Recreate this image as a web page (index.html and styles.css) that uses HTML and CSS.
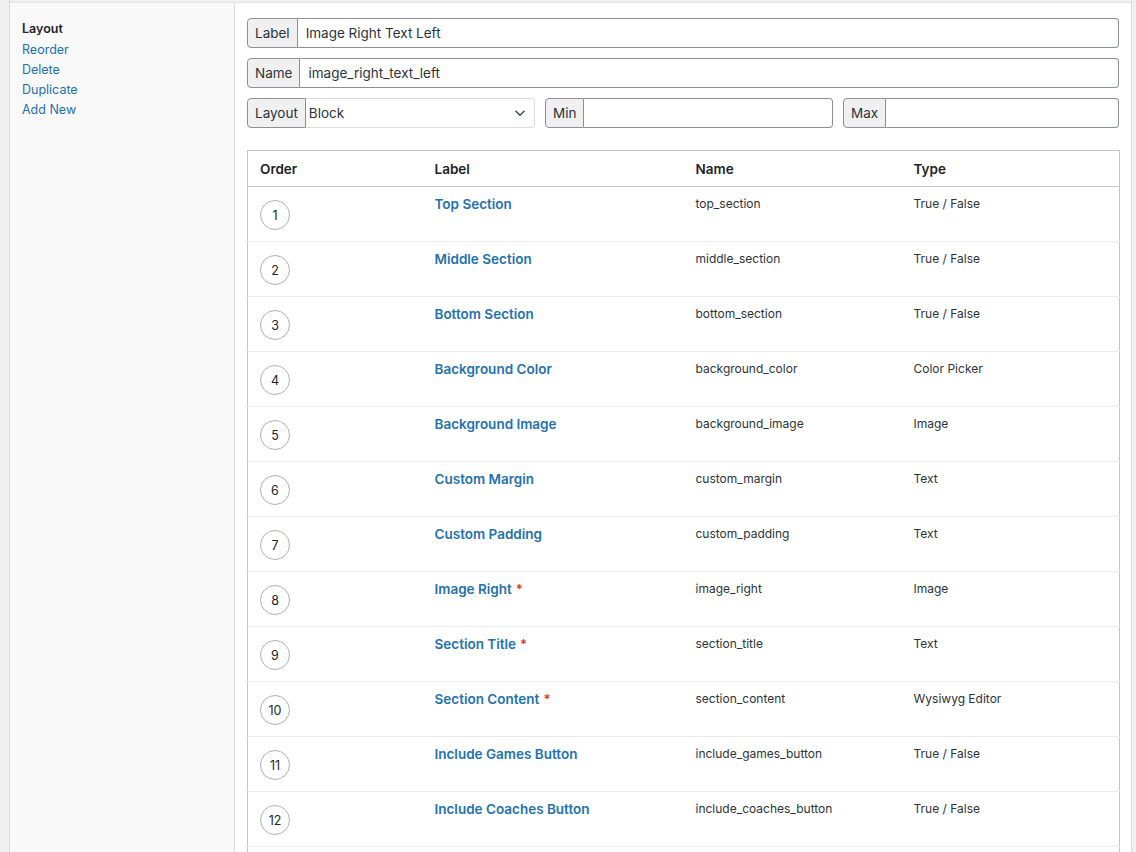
FILE: index.html
```html
<!DOCTYPE html>
<html>
<head>
<meta charset="utf-8">
<link rel="stylesheet" href="styles.css">
</head>
<body>
<div class="wrap">
  <aside class="side">
    <div class="side-title">Layout</div>
    <a class="side-link">Reorder</a>
    <a class="side-link">Delete</a>
    <a class="side-link">Duplicate</a>
    <a class="side-link">Add New</a>
  </aside>
  <main class="main">
    <div class="field"><span class="addon">Label</span><span class="input">Image Right Text Left</span></div>
    <div class="field"><span class="addon">Name</span><span class="input">image_right_text_left</span></div>
    <div class="row3">
      <div class="field"><span class="addon">Layout</span><span class="select">Block<svg class="chev" width="12" height="8" viewBox="0 0 12 8"><path d="M1.5 1.8 6 6.2 10.5 1.8" fill="none" stroke="#3c434a" stroke-width="1.4"/></svg></span></div>
      <div class="field"><span class="addon">Min</span><span class="input"></span></div>
      <div class="field"><span class="addon">Max</span><span class="input"></span></div>
    </div>
    <table class="tbl">
      <colgroup><col class="c1"><col class="c2"><col class="c3"><col class="c4"></colgroup>
      <thead><tr><th>Order</th><th>Label</th><th>Name</th><th>Type</th></tr></thead>
      <tbody>
        <tr><td><span class="num">1</span></td><td><a class="lbl">Top Section</a></td><td class="sm">top_section</td><td class="sm">True / False</td></tr>
        <tr><td><span class="num">2</span></td><td><a class="lbl">Middle Section</a></td><td class="sm">middle_section</td><td class="sm">True / False</td></tr>
        <tr><td><span class="num">3</span></td><td><a class="lbl">Bottom Section</a></td><td class="sm">bottom_section</td><td class="sm">True / False</td></tr>
        <tr><td><span class="num">4</span></td><td><a class="lbl">Background Color</a></td><td class="sm">background_color</td><td class="sm">Color Picker</td></tr>
        <tr><td><span class="num">5</span></td><td><a class="lbl">Background Image</a></td><td class="sm">background_image</td><td class="sm">Image</td></tr>
        <tr><td><span class="num">6</span></td><td><a class="lbl">Custom Margin</a></td><td class="sm">custom_margin</td><td class="sm">Text</td></tr>
        <tr><td><span class="num">7</span></td><td><a class="lbl">Custom Padding</a></td><td class="sm">custom_padding</td><td class="sm">Text</td></tr>
        <tr><td><span class="num">8</span></td><td><a class="lbl">Image Right</a><span class="req">*</span></td><td class="sm">image_right</td><td class="sm">Image</td></tr>
        <tr><td><span class="num">9</span></td><td><a class="lbl">Section Title</a><span class="req">*</span></td><td class="sm">section_title</td><td class="sm">Text</td></tr>
        <tr><td><span class="num">10</span></td><td><a class="lbl">Section Content</a><span class="req">*</span></td><td class="sm">section_content</td><td class="sm">Wysiwyg Editor</td></tr>
        <tr><td><span class="num">11</span></td><td><a class="lbl">Include Games Button</a></td><td class="sm">include_games_button</td><td class="sm">True / False</td></tr>
        <tr><td><span class="num">12</span></td><td><a class="lbl">Include Coaches Button</a></td><td class="sm">include_coaches_button</td><td class="sm">True / False</td></tr>
        <tr class="empty"><td></td><td></td><td></td><td></td></tr>
      </tbody>
    </table>
  </main>
  <div class="rgutter"></div>
</div>
</body>
</html>
```
FILE: styles.css
```css
html, body { margin: 0; padding: 0; }
body {
  background: #f0f0f1;
  font-family: Inter, "Liberation Sans", sans-serif;
  color: #1d2327;
  height: 852px;
  overflow: hidden;
}
.wrap {
  display: flex;
  margin-left: 9px;
  border-left: 1px solid #dcdcde;
  height: 852px;
}
.side {
  width: 225px;
  flex: none;
  background: #f9f9f9;
  border-right: 1px solid #dcdcde;
  border-top: 1px solid #e4e4e7;
  margin-top: 2px;
  padding: 17px 0 0 12px;
  box-sizing: border-box;
  display: flex;
  flex-direction: column;
}
.side-title {
  font-size: 12.5px;
  font-weight: 600;
  line-height: 18px;
  margin-bottom: 2px;
  color: #1d2327;
}
.side-link {
  font-size: 12.5px;
  line-height: 20px;
  color: #2271b1;
}
.main {
  width: 896px;
  flex: none;
  background: #fff;
  border-top: 1px solid #e4e4e7;
  margin-top: 2px;
  padding: 15px 12px 0 12px;
  box-sizing: border-box;
  display: flex;
  flex-direction: column;
  overflow: hidden;
}
.main > * { flex: none; }
.rgutter {
  flex: 1;
  border-left: 1px solid #dcdcde;
  background: #f0f0f1;
}
.field {
  display: flex;
  height: 30px;
  margin-bottom: 10px;
  font-size: 13.5px;
  box-sizing: border-box;
}
.addon {
  background: #f0f0f1;
  border: 1px solid #8c8f94;
  border-radius: 4px 0 0 4px;
  padding: 0 7px;
  display: flex;
  align-items: center;
  color: #2c3338;
  box-sizing: border-box;
}
.input {
  flex: 1;
  border: 1px solid #8c8f94;
  border-left: none;
  border-radius: 0 4px 4px 0;
  display: flex;
  align-items: center;
  padding: 0 8px;
  color: #2c3338;
}
.select {
  flex: 1;
  border: 1px solid #dcdcde;
  border-left: none;
  border-radius: 0 4px 4px 0;
  display: flex;
  align-items: center;
  justify-content: space-between;
  padding: 0 8px 0 3px;
  color: #2c3338;
}
.chev { display: block; }
.row3 {
  display: grid;
  grid-template-columns: 288px 288px 1fr;
  gap: 10px;
  margin-bottom: 22px;
}
.row3 .field { margin-bottom: 0; }
.tbl {
  width: 872px;
  border-collapse: collapse;
  table-layout: fixed;
  border: 1px solid #c3c4c7;
}
.c1 { width: 175px; }
.c2 { width: 261px; }
.c3 { width: 218px; }
.c4 { width: 218px; }
th {
  text-align: left;
  font-weight: 600;
  font-size: 13.5px;
  height: 36px;
  padding: 0 12px;
  border-bottom: 1px solid #c3c4c7;
  color: #1d2327;
  box-sizing: border-box;
}
td {
  height: 55px;
  vertical-align: top;
  padding: 6px 12px 0 12px;
  border-bottom: 1px solid #ebebeb;
  box-sizing: border-box;
}
td.sm { padding-top: 7px; }
.num {
  display: flex;
  width: 28px;
  height: 28px;
  border: 1px solid #aeb0b3;
  border-radius: 50%;
  align-items: center;
  justify-content: center;
  font-size: 12.5px;
  color: #1d2327;
  margin-top: 7px;
}
.lbl {
  font-weight: 600;
  font-size: 13.5px;
  color: #2271b1;
  line-height: 20px;
}
.req { color: #d63638; font-weight: 600; font-size: 13px; margin-left: 4px; }
.sm {
  font-size: 12px;
  line-height: 20px;
  color: #2c3338;
}
```
